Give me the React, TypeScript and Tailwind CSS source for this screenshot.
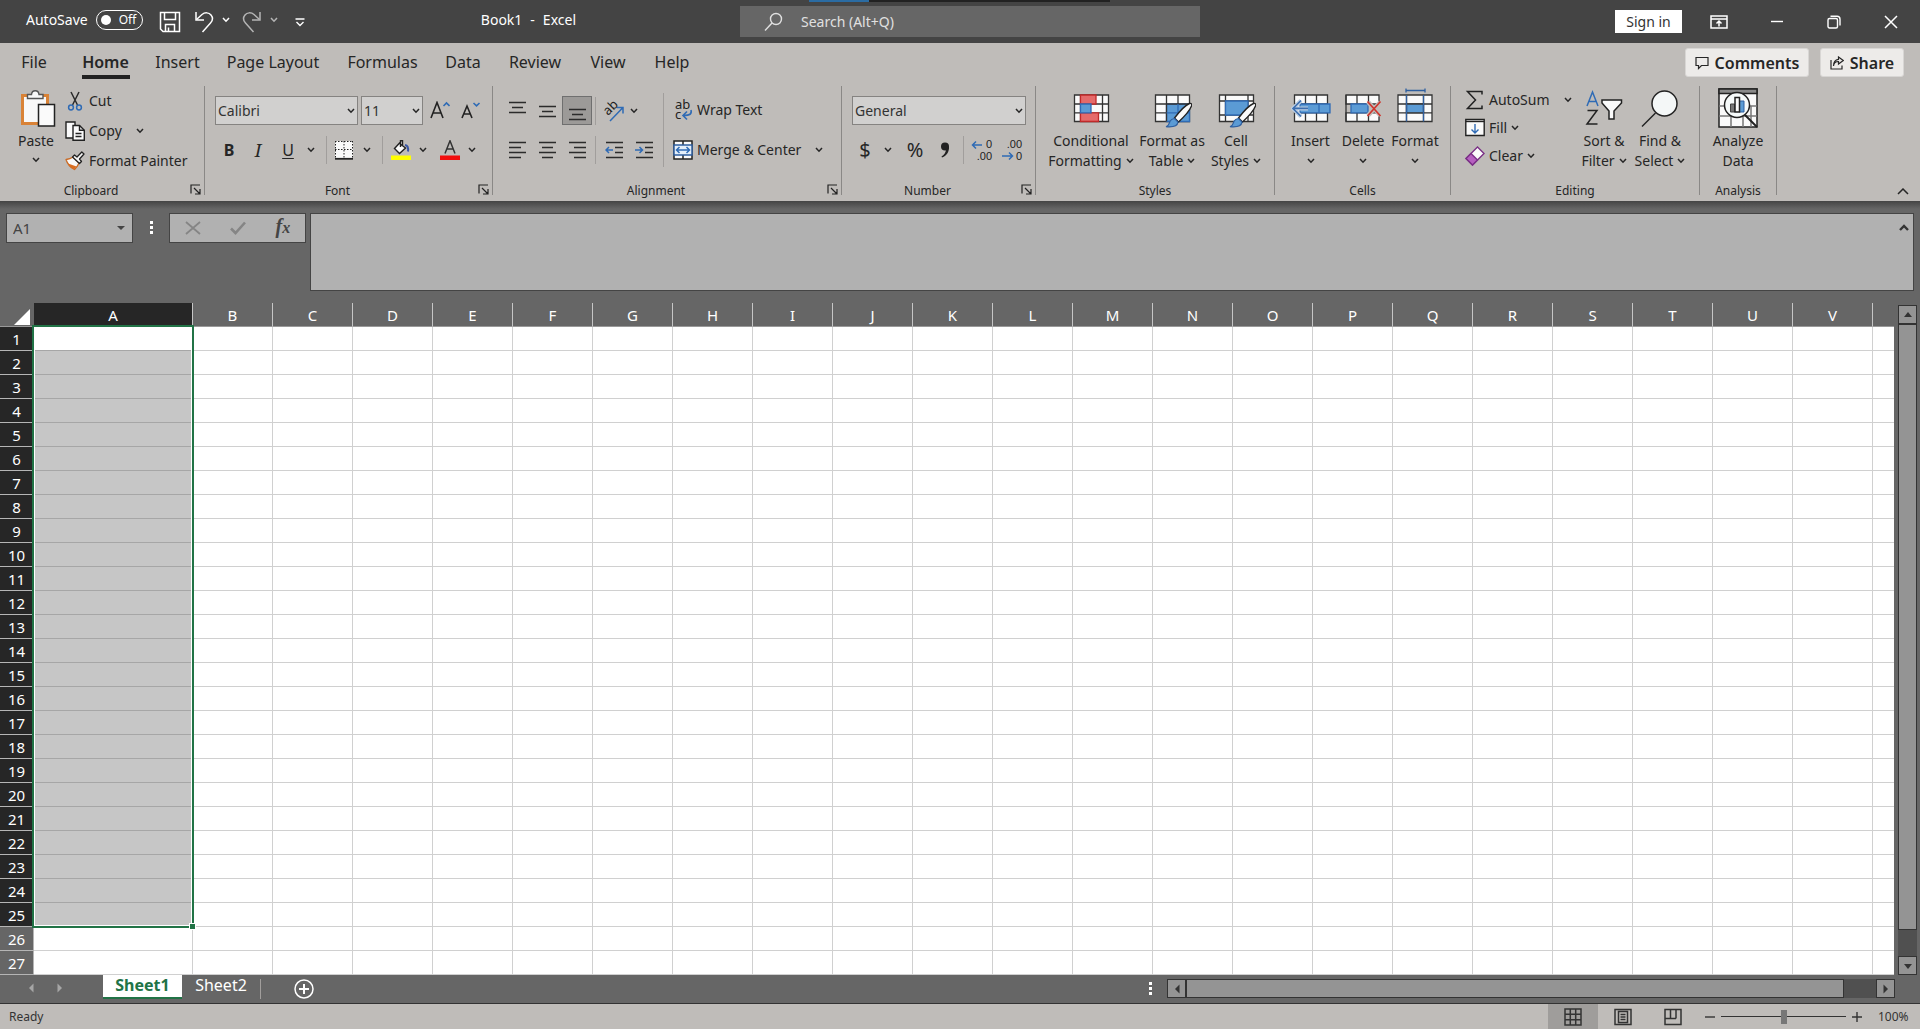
import type { ReactNode } from 'react';
import { clsx } from 'clsx';

const TABS = [
  { label: 'File', width: 'w-[68px]' },
  { label: 'Home', width: 'w-[75px]' },
  { label: 'Insert', width: 'w-[69px]' },
  { label: 'Page Layout', width: 'w-[122px]' },
  { label: 'Formulas', width: 'w-[97px]' },
  { label: 'Data', width: 'w-[64px]' },
  { label: 'Review', width: 'w-[80px]' },
  { label: 'View', width: 'w-[66px]' },
  { label: 'Help', width: 'w-[62px]' },
];

const COLUMNS = 'ABCDEFGHIJKLMNOPQRSTUV'.split('');
const ROWS = Array.from({ length: 27 }, (_, index) => index + 1);
const SELECTED_ROWS = 25;

function Chevron({ className }: { className?: string }) {
  return (
    <svg viewBox="0 0 8 6" className={clsx('h-[6px] w-2 shrink-0', className)} fill="none" stroke="currentColor" strokeWidth="1.5">
      <path d="M1 1l3 3.2L7 1" />
    </svg>
  );
}

function Divider({ className }: { className?: string }) {
  return <span className={clsx('w-px shrink-0 bg-[#a19e9c]', className)} />;
}

/* ---------- title bar icons ---------- */

function SaveIcon() {
  return (
    <svg viewBox="0 0 22 22" className="h-[22px] w-[22px]" fill="none" stroke="currentColor" strokeWidth="1.5">
      <path d="M1.5 1.5h19v19H4l-2.5-2.5z" />
      <path d="M5.5 1.5v7h11v-7M6.5 20.5v-7h9v7M9.5 20v-3.5" />
    </svg>
  );
}

function UndoIcon({ flip }: { flip?: boolean }) {
  return (
    <svg viewBox="0 0 20 22" className={clsx('h-[22px] w-5', flip && '-scale-x-100')} fill="none" stroke="currentColor" strokeWidth="1.5">
      <path d="M2 1v8h8" />
      <path d="M2.5 8.500L8 3.500c3-2.500 7-2 9 .5s1.800 5.500-.5 8L8.500 21" />
    </svg>
  );
}

function CustomizeIcon() {
  return (
    <svg viewBox="0 0 10 9" className="h-[9px] w-[10px]" fill="none" stroke="currentColor" strokeWidth="1.4">
      <path d="M.5 1h9M1.5 4L5 7.500 8.500 4" />
    </svg>
  );
}

function SearchIcon() {
  return (
    <svg viewBox="0 0 20 20" className="h-5 w-5" fill="none" stroke="currentColor" strokeWidth="1.4">
      <circle cx="12" cy="7" r="5.5" />
      <path d="M8 11L1 18.500" />
    </svg>
  );
}

function RibbonDisplayIcon() {
  return (
    <svg viewBox="0 0 18 14" className="h-[14px] w-[18px]" fill="none" stroke="currentColor" strokeWidth="1.5">
      <path d="M1 1h16v12H1zM1 4h16M9 11.500V6M6.500 8.500L9 6l2.500 2.500" />
    </svg>
  );
}

function MinimizeIcon() {
  return (
    <svg viewBox="0 0 14 14" className="h-[14px] w-[14px]" stroke="currentColor" strokeWidth="1.4">
      <path d="M1 6.500h12" />
    </svg>
  );
}

function RestoreIcon() {
  return (
    <svg viewBox="0 0 14 14" className="h-[14px] w-[14px]" fill="none" stroke="currentColor" strokeWidth="1.4">
      <rect x="1" y="3.500" width="9.5" height="9.5" rx="1.5" />
      <path d="M3.500 1.200h6.500a3 3 0 0 1 3 3v6.300" />
    </svg>
  );
}

function CloseIcon() {
  return (
    <svg viewBox="0 0 14 14" className="h-[14px] w-[14px]" stroke="currentColor" strokeWidth="1.5">
      <path d="M1 1l12 12M13 1L1 13" />
    </svg>
  );
}

/* ---------- ribbon icons ---------- */

function PasteIcon() {
  return (
    <svg viewBox="0 0 36 40" className="h-10 w-9">
      <path d="M2.500 7.500h25v28h-25z" fill="#f8f8f8" stroke="#d98236" strokeWidth="3" />
      <path d="M7.500 10.500v-4h4c.5-5 7-5 7.500 0h4v4z" fill="#f8f8f8" stroke="#555" strokeWidth="1.4" />
      <path d="M18.500 16.500h16v21.500h-16z" fill="#fafafa" stroke="#222" strokeWidth="1.5" />
    </svg>
  );
}

function CutIcon() {
  return (
    <svg viewBox="0 0 20 20" className="h-5 w-5" fill="none">
      <path d="M6 1l6.500 13M14 1L7.500 14" stroke="#2b2b2b" strokeWidth="1.5" />
      <circle cx="6" cy="16.500" r="2.4" stroke="#2f6bb5" strokeWidth="1.5" />
      <circle cx="14" cy="16.500" r="2.4" stroke="#2f6bb5" strokeWidth="1.5" />
    </svg>
  );
}

function CopyIcon() {
  return (
    <svg viewBox="0 0 20 20" className="h-5 w-5" fill="#fafafa" stroke="#222" strokeWidth="1.4">
      <path d="M8 17H1V1h9v4" />
      <path d="M8 4.500h6.500l4.800 4.800v10H8z" />
      <path d="M14.500 4.500v4.800h4.800M10.500 12.500h6M10.500 15.500h6" fill="none" />
    </svg>
  );
}

function PainterIcon() {
  return (
    <svg viewBox="0 0 20 20" className="h-5 w-5" strokeWidth="1.3" strokeLinejoin="round">
      <path d="M1 8.500c3-.3 5-1 7-2.500l6 6c-1 2.500-2.500 4.500-4.500 6.500C5 16.500 2.500 13 1 8.500z" fill="#f8f8f8" stroke="#c96a24" />
      <path d="M3 12.500l8.500 3-2.500 3c-3-1.500-4.700-3.500-6-6z" fill="#d96d20" />
      <path d="M7.500 6l2-2 2.500 2 4.800-5 2.200 2-4.500 5 2 2.500-2 2z" fill="#f8f8f8" stroke="#222" />
    </svg>
  );
}

function LauncherIcon() {
  return (
    <svg viewBox="0 0 11 11" className="h-[11px] w-[11px]" fill="none" stroke="#222" strokeWidth="1.2">
      <path d="M1 9.500V1h9M4 4l5.500 5.500M10 5v5H5" />
    </svg>
  );
}

function FontSizeIcon({ shrink }: { shrink?: boolean }) {
  return (
    <svg viewBox="0 0 20 20" className="h-5 w-5" fill="none" strokeWidth="1.6">
      <path d={shrink ? 'M1 17L6 5l5 12M2.800 13h6.400' : 'M1 17L7 1.500 13 17M3.200 12h7.600'} stroke="#222" />
      <path d={shrink ? 'M12.500 2l3 2.800L18.500 2' : 'M13.500 5l3-3 3 3'} stroke="#2f6bb5" />
    </svg>
  );
}

function BordersIcon() {
  return (
    <svg viewBox="0 0 20 20" className="h-5 w-5" fill="none" stroke="#222">
      <path d="M1 1h18v17H1z" fill="#fafafa" stroke="none" />
      <path d="M1 1.500h18M1.500 1v17M18.500 1v17M10 1v17M1 9.500h18" strokeDasharray="1.5 1.5" />
      <path d="M1 18.800h18" strokeWidth="1.8" />
    </svg>
  );
}

function FillColorIcon() {
  return (
    <svg viewBox="0 0 20 20" className="h-5 w-5" fill="none">
      <path d="M8 3l6.500 5-6 5.500L3.500 8.500 9.500 2M9.500 7V.8h2V5" fill="#fafafa" stroke="#222" strokeWidth="1.4" />
      <path d="M14 5c3 .5 3.500 3 3 6.500" stroke="#3a57a5" strokeWidth="2" />
      <path d="M0 15.500h20v4.500H0z" fill="#ff0" />
    </svg>
  );
}

function FontColorIcon() {
  return (
    <svg viewBox="0 0 20 20" className="h-5 w-5" fill="none">
      <path d="M5 13.500L10 .8l5 12.700M6.800 9h6.400" stroke="#333" strokeWidth="1.5" />
      <path d="M0 15.500h20v4.500H0z" fill="#f20d0d" />
    </svg>
  );
}

const LINES = {
  top: 'M1 1.500h17M4 6.500h11M1 11.500h17',
  middle: 'M1 5.500h17M4 10.500h11M1 15.500h17',
  bottom: 'M1 8.500h17M4 13.500h11M1 18.500h17',
  left: 'M1 2.500h17M1 7.500h12M1 12.500h17M1 17.500h12',
  center: 'M1 2.500h17M4 7.500h11M1 12.500h17M4 17.500h11',
  right: 'M1 2.500h17M6 7.500h12M1 12.500h17M6 17.500h12',
};

function LinesIcon({ kind }: { kind: keyof typeof LINES }) {
  return (
    <svg viewBox="0 0 19 20" className="h-5 w-[19px]" fill="none" stroke="#2b2b2b" strokeWidth="1.5">
      <path d={LINES[kind]} />
    </svg>
  );
}

function IndentIcon({ increase }: { increase?: boolean }) {
  return (
    <svg viewBox="0 0 19 20" className="h-5 w-[19px]" fill="none" strokeWidth="1.5">
      <path d="M1 2.500h17M10 7.500h8M10 12.500h8M1 17.500h17" stroke="#2b2b2b" />
      <path d={increase ? 'M0 10h7.500M4.500 7l3 3-3 3' : 'M8 10H.8M4 7l-3 3 3 3'} stroke="#2f6bb5" />
    </svg>
  );
}

function OrientationIcon() {
  return (
    <svg viewBox="0 0 22 22" className="h-[22px] w-[22px] overflow-visible">
      <text fontSize="13" fill="#222" transform="translate(6 16) rotate(-45)">ab</text>
      <path d="M8 21L20.500 8M15 7.500h6v6" fill="none" stroke="#2f6bb5" strokeWidth="1.5" />
    </svg>
  );
}

function WrapIcon() {
  return (
    <svg viewBox="0 0 20 22" className="h-[22px] w-5 overflow-visible">
      <text x="2" y="10" fontSize="13" fill="#222">ab</text>
      <text x="2" y="20" fontSize="13" fill="#222">c</text>
      <path d="M18 11c1 4-1 5.500-7.500 5.500M14 12.500l-4 4 4 4" fill="none" stroke="#2f6bb5" strokeWidth="1.6" />
    </svg>
  );
}

function MergeIcon() {
  return (
    <svg viewBox="0 0 20 20" className="h-5 w-5" fill="none" stroke="#222" strokeWidth="1.5">
      <path d="M1 1h18v18H1z" fill="#fafafa" />
      <path d="M10 1v4M10 15v4" />
      <path d="M1 5h18v10H1z" fill="#e4effa" stroke="#2f5f9f" />
      <path d="M3.500 10h13M6.500 7l-3 3 3 3M13.500 7l3 3-3 3" stroke="#2f6bb5" />
    </svg>
  );
}

function DecimalIcon({ decrease }: { decrease?: boolean }) {
  return (
    <svg viewBox="0 0 22 22" className="h-[22px] w-[22px] overflow-visible">
      <g fontSize="11" fill="#222" textAnchor="end" className="font-['Liberation_Sans',sans-serif]">
        <text x="21" y="9">{decrease ? '.00' : '0'}</text>
        <text x="21" y="21">{decrease ? '0' : '.00'}</text>
      </g>
      <path
        d={decrease ? 'M1 17h10M8 13.500l3.500 3.500L8 20.500' : 'M11 6H1.500M5 2.500L1.500 6 5 9.500'}
        fill="none"
        stroke="#2f6bb5"
        strokeWidth="1.5"
      />
    </svg>
  );
}

function ConditionalIcon() {
  return (
    <svg viewBox="-1 0 40 40" className="h-10 w-10" stroke="#333" strokeWidth="1.3">
      <path d="M2.500 7h34v26.500h-34z" fill="#fafafa" />
      <path d="M8.500 7v26.500M30.500 7v26.500M2.500 16h34M2.500 24.800h34" fill="none" />
      <path d="M8.500 7h15.500v9H8.500zM8.500 24.800h18v8.700h-18z" fill="#e56a6a" stroke="#c02a2a" />
      <path d="M8.500 16h10.500v8.800H8.500z" fill="#5b9bd5" stroke="#2f6bb5" />
    </svg>
  );
}

function Brush() {
  return (
    <>
      <path d="M36.500 15.500c2-.5 2.500.5 2 2.500-2 5-7.500 11-13 16l-4-4c5-6.500 10-12.500 15-14.500z" fill="#fafafa" stroke="#222" strokeWidth="1.4" />
      <path d="M21.500 30.500l3.500 3.700c-.5 3.300-4 5.300-12 4.500 3.300-1 3-3.500 4-5.500 1-1.800 2.700-2.500 4.500-2.700z" fill="#5b9bd5" stroke="#2f5f9f" strokeWidth="1.2" />
    </>
  );
}

function FormatTableIcon() {
  return (
    <svg viewBox="-1 0 40 40" className="h-10 w-10" stroke="#333" strokeWidth="1.3">
      <path d="M2.500 7h34v26.500h-34z" fill="#fafafa" />
      <path d="M13.500 16h23v17.500h-23z" fill="#5b9bd5" stroke="#2f6bb5" />
      <path d="M13.500 7v26.500M25 7v9M2.500 16h34M2.500 24.800h11" fill="none" />
      <path d="M25 16v17.500M13.500 24.800h23" stroke="#2f6bb5" />
      <Brush />
    </svg>
  );
}

function CellStylesIcon() {
  return (
    <svg viewBox="-1 0 40 40" className="h-10 w-10" stroke="#333" strokeWidth="1.3">
      <path d="M2.500 7h34v26.500h-34z" fill="#fafafa" />
      <path d="M8.500 7v26.500M31 7v26.500M2.500 13h34M2.500 27h34" fill="none" />
      <path d="M8.500 13H31v14H8.500z" fill="#5b9bd5" stroke="#2f6bb5" />
      <Brush />
    </svg>
  );
}

function InsertCellsIcon() {
  return (
    <svg viewBox="0 0 40 40" className="h-10 w-10" stroke="#333" strokeWidth="1.3">
      <path d="M3.500 7h33v26.500h-33z" fill="#fafafa" />
      <path d="M14.500 7v26.500M25.500 7v26.500M3.500 16h33M3.500 24.800h33" fill="none" />
      <path d="M9 16h30v8.800H9z" fill="#5b9bd5" stroke="#2f6bb5" />
      <path d="M28 16v8.800" stroke="#2f6bb5" />
      <path d="M17 20.400H2.500M10 12.500l-8 8 8 8" fill="none" stroke="#bfd0e2" strokeWidth="4" />
      <path d="M17 20.400H2.500M10 12.500l-8 8 8 8" fill="none" stroke="#3c6eb0" strokeWidth="1.6" />
    </svg>
  );
}

function DeleteCellsIcon() {
  return (
    <svg viewBox="0 0 40 40" className="h-10 w-10" stroke="#333" strokeWidth="1.3">
      <path d="M3 7h33v9H3zM3 24.800h33v8.700H3z" fill="#fafafa" />
      <path d="M14 7v9M25.500 7v9M14 24.800v8.700M25.500 24.800v8.700M3 7v26.500" fill="none" />
      <path d="M8 16h17v8.800H8z" fill="#5b9bd5" stroke="#2f6bb5" />
      <path d="M25 14l12.500 13.500M37.500 14L25 27.500" stroke="#bfbcb9" strokeWidth="4.5" />
      <path d="M24.500 13.500l13 14.500M37.500 13.500L24.500 28" stroke="#d0342c" strokeWidth="1.7" />
    </svg>
  );
}

function FormatCellsIcon() {
  return (
    <svg viewBox="0 0 40 40" className="h-10 w-10" stroke="#333" strokeWidth="1.3">
      <path d="M3 7h34v26.500H3z" fill="#fafafa" />
      <path d="M11.500 7v26.500M28.500 7v26.500M3 16h34M3 24.800h34" fill="none" />
      <path d="M11.500 16h17v8.800h-17z" fill="#5b9bd5" />
      <path d="M11.500 7v26.500M28.500 7v26.500M11 2.500h19M11 .5v4M30 .5v4" stroke="#2f5f9f" fill="none" />
    </svg>
  );
}

function SumIcon() {
  return (
    <svg viewBox="0 0 20 20" className="h-5 w-5" fill="none" stroke="#222" strokeWidth="1.5">
      <path d="M17 4.500V1.500H2.500L10.500 10l-8 8.500H17v-3" />
    </svg>
  );
}

function FillIcon() {
  return (
    <svg viewBox="0 0 20 20" className="h-5 w-5" fill="none" stroke="#222" strokeWidth="1.4">
      <path d="M.8 1.500h18.400v16H.8z" fill="#fafafa" />
      <path d="M.8 3.500h18.400" />
      <path d="M10 6v9M6.500 11.500l3.500 3.500 3.500-3.500" stroke="#2f6bb5" />
    </svg>
  );
}

function ClearIcon() {
  return (
    <svg viewBox="0 0 20 20" className="h-5 w-5" stroke="#7a2f86" strokeWidth="1.4">
      <path d="M12.500 1l6.500 6.500L7.500 19 1 12.500z" fill="#fafafa" />
      <path d="M6 7.500l6.500 6.500L7.500 19 1 12.500z" fill="#b65fc0" />
    </svg>
  );
}

function SortIcon() {
  return (
    <svg viewBox="0 0 40 40" className="h-10 w-10" fill="none" strokeWidth="1.5">
      <path d="M3 18L8.500 4 14 18M5 13.500h7" stroke="#2f6bb5" />
      <path d="M3.500 22.500H13L3 36h10.500" stroke="#222" />
      <path d="M18 12h19.500v3l-7.500 8v8h-5v-8l-7-8z" fill="#fafafa" stroke="#222" />
    </svg>
  );
}

function FindIcon() {
  return (
    <svg viewBox="0 0 40 40" className="h-10 w-10" stroke="#222" strokeWidth="1.5">
      <circle cx="24.500" cy="15.500" r="12.5" fill="#f4f7f7" />
      <path d="M15.500 25L2 38.500" />
    </svg>
  );
}

function AnalyzeIcon() {
  return (
    <svg viewBox="0 0 40 40" className="h-10 w-10" stroke="#222" strokeWidth="1.5">
      <path d="M1 1h38v38H1z" fill="#fafafa" />
      <path d="M1 1h38v4.500H1z" fill="#8a8a8a" />
      <path d="M1 18h38M1 28h38M13 27v12M25 27v12M33 18v21" fill="none" stroke="#777" />
      <path d="M27 27l12 12" strokeWidth="2" />
      <circle cx="19" cy="17" r="12.5" fill="#f6fafa" />
      <path d="M12.500 16h4v8h-4z" fill="#777" stroke="#444" strokeWidth="1" />
      <path d="M21.500 13h4.500v11h-4.500z" fill="#5b9bd5" stroke="#2f5f9f" strokeWidth="1" />
      <path d="M17 9.500h4.500V24H17z" fill="#fafafa" />
    </svg>
  );
}

/* ---------- ribbon building blocks ---------- */

function Group({ label, width, launcher, children }: { label: string; width: string; launcher?: boolean; children: ReactNode }) {
  return (
    <section className={clsx('flex h-[109px] shrink-0 flex-col border-r border-[#8a8886]', width)}>
      <div className="flex flex-1">{children}</div>
      <footer className="flex h-3 items-center">
        <span className={clsx('flex-1 pt-1 text-center text-xs leading-3 whitespace-nowrap', launcher && 'pr-2')}>{label}</span>
        {launcher && (
          <button className="mr-[3px]" aria-label={`${label} settings`}>
            <LauncherIcon />
          </button>
        )}
      </footer>
    </section>
  );
}

function Row({ icon, label, chevron, wide }: { icon: ReactNode; label: string; chevron?: boolean; wide?: boolean }) {
  return (
    <button className="flex items-center gap-1 text-sm leading-5 whitespace-nowrap">
      {icon}
      {label}
      {chevron && <Chevron className={wide ? 'ml-[10px]' : ''} />}
    </button>
  );
}

function BigButton({ icon, lines, width, chevron }: { icon: ReactNode; lines: string[]; width: string; chevron?: boolean }) {
  return (
    <button className={clsx('flex h-[90px] shrink-0 flex-col items-center pt-[2px] text-sm leading-5 whitespace-nowrap', width)}>
      {icon}
      <span className="mt-[3px]">{lines[0]}</span>
      <span className="flex h-5 items-center gap-1">
        {lines[1]}
        {chevron && <Chevron />}
      </span>
    </button>
  );
}

function Tool({ label, width = 'w-[30px]', active, children }: { label: string; width?: string; active?: boolean; children: ReactNode }) {
  return (
    <button
      aria-label={label}
      className={clsx('flex h-[29px] shrink-0 items-center justify-center', width, active && 'border border-[#6f6f6f] bg-[#9c9a98]')}
    >
      {children}
    </button>
  );
}

function Dropdown({ label, value, width }: { label: string; value: string; width: string }) {
  return (
    <div className={clsx('relative h-[29px] shrink-0', width)}>
      <select aria-label={label} className="h-full w-full appearance-none border border-[#858381] bg-[#d1d0cf] pl-[2px] text-sm text-[#333]">
        <option>{value}</option>
      </select>
      <Chevron className="pointer-events-none absolute top-3 right-[3px]" />
    </div>
  );
}

function Toggle() {
  return (
    <label className="flex items-center gap-2 text-sm text-white">
      AutoSave
      <input type="checkbox" role="switch" className="sr-only" />
      <span className="flex h-5 w-[47px] items-center gap-2 rounded-full border border-white pl-1 text-xs">
        <span className="h-[10px] w-[10px] rounded-full bg-white" />
        Off
      </span>
    </label>
  );
}

function TitleBar() {
  return (
    <header className="relative grid h-[43px] grid-cols-[minmax(0,1fr)_460px_minmax(0,1fr)] bg-[#444] pl-5 text-white">
      <div className="absolute top-0 left-[809px] h-[2px] w-[301px] bg-[#222]">
        <div className="h-full w-[60px] bg-[#2b6ca3]" />
      </div>
      <div className="flex h-10 items-center pl-[6px]">
        <Toggle />
        <button className="mt-1 ml-4" aria-label="Save"><SaveIcon /></button>
        <button className="mt-1 ml-[13px]" aria-label="Undo"><UndoIcon /></button>
        <button className="ml-2" aria-label="Undo history"><Chevron /></button>
        <button className="mt-1 ml-3 text-[#b5b5b5]" aria-label="Redo"><UndoIcon flip /></button>
        <button className="ml-2 text-[#b5b5b5]" aria-label="Redo history"><Chevron /></button>
        <button className="mt-1 ml-[17px]" aria-label="Customize toolbar"><CustomizeIcon /></button>
        <h1 className="mr-[164px] ml-auto flex gap-2 text-sm"><span>Book1</span> <span>-</span> <span>Excel</span></h1>
      </div>
      <label className="mt-[6px] flex h-[31px] items-center gap-[17px] bg-[#666] pl-6 text-[#e0e0e0]">
        <SearchIcon />
        <input type="search" aria-label="Search" placeholder="Search (Alt+Q)" className="flex-1 bg-transparent text-sm placeholder:text-[#e0e0e0]" />
      </label>
      <div className="flex h-[43px] items-center justify-end">
        <button className="mr-2 h-[23px] w-[67px] bg-white text-sm leading-5 text-[#333]">Sign in</button>
        <button className="flex w-[58px] justify-center" aria-label="Ribbon display options"><RibbonDisplayIcon /></button>
        <button className="flex w-[58px] justify-center" aria-label="Minimize"><MinimizeIcon /></button>
        <button className="flex w-[56px] justify-center" aria-label="Restore"><RestoreIcon /></button>
        <button className="flex w-[58px] justify-center" aria-label="Close"><CloseIcon /></button>
      </div>
    </header>
  );
}

function TabBar() {
  return (
    <nav className="flex h-[43px] items-start">
      {TABS.map(({ label, width }) => (
        <button key={label} className={clsx('flex h-9 shrink-0 flex-col items-center pt-[6px] text-base leading-[26px]', width, label === 'Home' && 'font-semibold')}>
          {label}
          {label === 'Home' && <span className="h-1 w-12 bg-[#222]" />}
        </button>
      ))}
      <div className="mt-[5px] mr-4 ml-auto flex gap-[11px]">
        <button className="flex h-[29px] w-[124px] items-center justify-center gap-[6px] rounded-[3px] border border-[#d8d6d4] bg-[#edebe9] font-semibold">
          <svg viewBox="0 0 14 14" className="h-[14px] w-[14px]" fill="none" stroke="currentColor" strokeWidth="1.2">
            <path d="M1 1.500h12v8H6.500L3.500 12.500v-3H1z" />
          </svg>
          Comments
        </button>
        <button className="flex h-[29px] w-[84px] items-center justify-center gap-[6px] rounded-[3px] border border-[#d8d6d4] bg-[#edebe9] font-semibold">
          <svg viewBox="0 0 14 14" className="h-[14px] w-[14px]" fill="none" stroke="currentColor" strokeWidth="1.2">
            <path d="M1 4v9h11v-3.500M3.500 10c.3-3 2-4.500 5-4.500V8L13.300 4.500 8.500 1v2.300C5 3.800 3.500 6 3.500 10z" />
          </svg>
          Share
        </button>
      </div>
    </nav>
  );
}

function Ribbon() {
  return (
    <div className="flex h-[115px] text-[#262626]">
      <Group label="Clipboard" width="w-[205px]" launcher>
        <button className="ml-[18px] flex w-10 shrink-0 flex-col items-center pt-[2px] text-sm leading-5">
          <PasteIcon />
          <span className="mt-[3px] -ml-1">Paste</span>
          <Chevron className="mt-[6px] -ml-1" />
        </button>
        <div className="ml-[7px] flex h-[90px] flex-col justify-around">
          <Row icon={<CutIcon />} label="Cut" />
          <Row icon={<CopyIcon />} label="Copy" chevron wide />
          <Row icon={<PainterIcon />} label="Format Painter" />
        </div>
      </Group>

      <Group label="Font" width="w-[288px]" launcher>
        <div className="flex flex-col gap-[10px] pt-[10px] pl-[10px]">
          <div className="flex items-center">
            <Dropdown label="Font" value="Calibri" width="w-[143px]" />
            <Dropdown label="Font size" value="11" width="ml-[3px] w-[62px]" />
            <Tool label="Increase font size" width="ml-[2px] w-[30px]"><FontSizeIcon /></Tool>
            <Tool label="Decrease font size" width="w-[32px]"><FontSizeIcon shrink /></Tool>
          </div>
          <div className="flex items-center">
            <Tool label="Bold" width="w-[28px]"><b className="text-base">B</b></Tool>
            <Tool label="Italic"><i className="font-[Noto_Serif,Liberation_Serif,serif] text-lg">I</i></Tool>
            <Tool label="Underline"><u className="text-base underline-offset-2">U</u></Tool>
            <Tool label="Underline style" width="w-[15px]"><Chevron /></Tool>
            <Divider className="ml-2 h-7" />
            <Tool label="Borders" width="w-[34px]"><BordersIcon /></Tool>
            <Tool label="Border style" width="w-[12px]"><Chevron /></Tool>
            <Divider className="ml-[9px] h-7" />
            <Tool label="Fill color" width="w-[36px]"><FillColorIcon /></Tool>
            <Tool label="Fill colors" width="w-[8px]"><Chevron /></Tool>
            <Tool label="Font color" width="w-[34px] ml-[6px]"><FontColorIcon /></Tool>
            <Tool label="Font colors" width="w-[10px]"><Chevron /></Tool>
          </div>
        </div>
      </Group>

      <Group label="Alignment" width="w-[349px]" launcher>
        <div className="flex flex-col gap-[10px] pt-[10px] pl-[9px]">
          <div className="flex items-center">
            <Tool label="Top align"><LinesIcon kind="top" /></Tool>
            <Tool label="Middle align"><LinesIcon kind="middle" /></Tool>
            <Tool label="Bottom align" active><LinesIcon kind="bottom" /></Tool>
            <Divider className="ml-[3px] h-7" />
            <Tool label="Orientation" width="w-[34px]"><OrientationIcon /></Tool>
            <Tool label="Orientation options" width="w-[8px]"><Chevron /></Tool>
          </div>
          <div className="flex items-center">
            <Tool label="Align left"><LinesIcon kind="left" /></Tool>
            <Tool label="Center"><LinesIcon kind="center" /></Tool>
            <Tool label="Align right"><LinesIcon kind="right" /></Tool>
            <Divider className="ml-[3px] h-7" />
            <Tool label="Decrease indent" width="w-[36px]"><IndentIcon /></Tool>
            <Tool label="Increase indent" width="w-[24px]"><IndentIcon increase /></Tool>
          </div>
        </div>
        <Divider className="mt-[7px] ml-[7px] h-[74px]" />
        <div className="flex flex-col gap-[19px] pt-[13px] pl-[9px]">
          <Row icon={<WrapIcon />} label="Wrap Text" />
          <Row icon={<MergeIcon />} label="Merge &amp; Center" chevron wide />
        </div>
      </Group>

      <Group label="Number" width="w-[194px]" launcher>
        <div className="flex flex-col gap-[10px] pt-[10px] pl-[10px]">
          <Dropdown label="Number format" value="General" width="w-[174px]" />
          <div className="flex items-center">
            <Tool label="Accounting format" width="w-[26px]"><span className="text-xl">$</span></Tool>
            <Tool label="Currencies" width="w-[20px]"><Chevron /></Tool>
            <Tool label="Percent style" width="w-[34px]"><span className="text-xl">%</span></Tool>
            <Tool label="Comma style" width="w-[26px]">
              <svg viewBox="0 0 10 16" className="h-4 w-[10px]" fill="#222">
                <circle cx="5" cy="4.500" r="4" />
                <path d="M9 4.500c.3 5-2 9-7 11l-.5-1C4.500 12.500 6 10 6 7z" />
              </svg>
            </Tool>
            <Divider className="ml-[5px] h-7" />
            <Tool label="Increase decimal" width="w-[36px]"><DecimalIcon /></Tool>
            <Tool label="Decrease decimal" width="w-[24px]"><DecimalIcon decrease /></Tool>
          </div>
        </div>
      </Group>

      <Group label="Styles" width="w-[239px]">
        <BigButton icon={<ConditionalIcon />} lines={['Conditional', 'Formatting']} width="w-[110px]" chevron />
        <BigButton icon={<FormatTableIcon />} lines={['Format as', 'Table']} width="w-[52px]" chevron />
        <BigButton icon={<CellStylesIcon />} lines={['Cell', 'Styles']} width="w-[76px]" chevron />
      </Group>

      <Group label="Cells" width="w-[176px]">
        <BigButton icon={<InsertCellsIcon />} lines={['Insert']} width="w-[71px]" chevron />
        <BigButton icon={<DeleteCellsIcon />} lines={['Delete']} width="w-[34px]" chevron />
        <BigButton icon={<FormatCellsIcon />} lines={['Format']} width="w-[70px]" chevron />
      </Group>

      <Group label="Editing" width="w-[249px]">
        <div className="flex h-[84px] w-[126px] shrink-0 flex-col justify-around pl-[14px]">
          <Row icon={<SumIcon />} label="AutoSum" chevron wide />
          <Row icon={<FillIcon />} label="Fill" chevron />
          <Row icon={<ClearIcon />} label="Clear" chevron />
        </div>
        <BigButton icon={<SortIcon />} lines={['Sort &', 'Filter']} width="w-[54px]" chevron />
        <BigButton icon={<FindIcon />} lines={['Find &', 'Select']} width="w-[58px]" chevron />
      </Group>

      <Group label="Analysis" width="w-[77px]">
        <BigButton icon={<AnalyzeIcon />} lines={['Analyze', 'Data']} width="w-[76px]" />
      </Group>

      <button className="mr-[11px] mb-[6px] ml-auto self-end" aria-label="Collapse ribbon">
        <svg viewBox="0 0 12 7" className="h-[7px] w-3" fill="none" stroke="currentColor" strokeWidth="1.5">
          <path d="M1 6l5-5 5 5" />
        </svg>
      </button>
    </div>
  );
}

function Dots() {
  return (
    <span className="flex shrink-0 flex-col gap-[2px]">
      <span className="h-[3px] w-[3px] bg-white" />
      <span className="h-[3px] w-[3px] bg-white" />
      <span className="h-[3px] w-[3px] bg-white" />
    </span>
  );
}

function FormulaBar() {
  return (
    <div className="flex h-[102px] items-start bg-[linear-gradient(#444,#666_8px)] pt-3 pr-[6px] pl-[6px]">
      <div className="relative h-[30px] w-[127px] shrink-0">
        <input aria-label="Name box" defaultValue="A1" className="h-full w-full border border-[#444] bg-[#b1b1b1] pl-[6px] text-[15px] text-[#444]" />
        <svg viewBox="0 0 8 4" className="absolute top-[13px] right-2 h-1 w-2" fill="#444">
          <path d="M0 0h8L4 4z" />
        </svg>
      </div>
      <div className="mt-2 ml-[17px]"><Dots /></div>
      <div className="ml-4 flex h-[30px] w-[137px] shrink-0 items-center justify-around border border-[#444] bg-[#b1b1b1] text-[#858585]">
        <button aria-label="Cancel">
          <svg viewBox="0 0 16 14" className="h-[14px] w-4" fill="none" stroke="currentColor" strokeWidth="1.8">
            <path d="M1 1l14 12M15 1L1 13" />
          </svg>
        </button>
        <button aria-label="Enter">
          <svg viewBox="0 0 16 14" className="h-[14px] w-4" fill="none" stroke="currentColor" strokeWidth="2.6">
            <path d="M1 7.500L5.500 12 15 1.500" />
          </svg>
        </button>
        <button aria-label="Insert function" className="font-[Liberation_Serif,serif] text-xl leading-5 font-bold text-[#444] italic">
          f<span className="text-base">x</span>
        </button>
      </div>
      <div className="relative ml-1 h-[78px] flex-1">
        <textarea aria-label="Formula" className="block h-full w-full resize-none border border-[#444] bg-[#b1b1b1]" />
        <svg viewBox="0 0 10 7" className="absolute top-[11px] right-[5px] h-[7px] w-[10px]" fill="none" stroke="#333" strokeWidth="2.4">
          <path d="M1 6l4-4 4 4" />
        </svg>
      </div>
    </div>
  );
}

function Arrow({ direction, className }: { direction: 'up' | 'down' | 'left' | 'right'; className?: string }) {
  const paths = { up: 'M1 7l4-5 4 5z', down: 'M1 3l4 5 4-5z', left: 'M7.500 .5v9L3 5z', right: 'M2.500 .5v9L7 5z' };
  return (
    <svg viewBox="0 0 10 10" className={clsx('h-[10px] w-[10px]', className)} fill="currentColor">
      <path d={paths[direction]} />
    </svg>
  );
}

function ScrollButton({ direction }: { direction: 'up' | 'down' | 'left' | 'right' }) {
  return (
    <button aria-label={`Scroll ${direction}`} className="flex h-[19px] w-[19px] shrink-0 items-center justify-center border border-[#333] bg-[#949494] text-[#333]">
      <Arrow direction={direction} />
    </button>
  );
}

function Sheet() {
  return (
    <div className="flex bg-[#666]">
      <div className="relative min-w-0 flex-1 overflow-hidden">
        <table className="w-full table-fixed border-separate border-spacing-0 text-[15px] leading-[22px] text-white">
          <colgroup>
            <col className="w-[34px]" />
            <col className="w-[159px]" />
            {COLUMNS.slice(1).map((column) => (
              <col key={column} className="w-[80px]" />
            ))}
            <col />
          </colgroup>
          <thead>
            <tr className="h-6">
              <th className="border-b border-[#999] p-0">
                <svg viewBox="0 0 16 16" className="mt-1 ml-[14px] h-4 w-4" fill="#fff">
                  <path d="M16 0v16H0z" />
                </svg>
              </th>
              {COLUMNS.map((column) => (
                <th
                  key={column}
                  scope="col"
                  className={clsx('border-r border-b border-r-[#c6c6c6] border-b-[#999] p-0 font-normal', column === 'A' && 'bg-[#262626]')}
                >
                  {column}
                </th>
              ))}
              <th className="border-b border-[#999] p-0" />
            </tr>
          </thead>
          <tbody>
            {ROWS.map((row) => {
              const selected = row <= SELECTED_ROWS;
              return (
                <tr key={row} className="h-6">
                  <th
                    scope="row"
                    className={clsx('border-r border-b border-[#b5b5b5] p-0 font-normal', selected ? 'bg-[#262626]' : 'bg-[#666]')}
                  >
                    {row}
                  </th>
                  <td className={clsx('border-r border-b p-0', selected ? 'border-[#a6a6a6]' : 'border-[#d0d0d0]', selected && row > 1 ? 'bg-[#c6c6c6]' : 'bg-white')} />
                  {COLUMNS.slice(1).map((column) => (
                    <td key={column} className="border-r border-b border-[#d0d0d0] bg-white p-0" />
                  ))}
                  <td className="border-b border-[#d0d0d0] bg-white p-0" />
                </tr>
              );
            })}
          </tbody>
        </table>
        <div className="pointer-events-none absolute top-[22px] left-8 h-[603px] w-[162px] border-2 border-[#217346] inset-shadow-[0_0_0_1px_#fff]">
          <span className="absolute -right-[4px] -bottom-[4px] h-[7px] w-[7px] border border-white bg-[#217346]" />
        </div>
      </div>
      <div className="mr-[3px] ml-1 flex w-[19px] shrink-0 flex-col pt-[2px]">
        <ScrollButton direction="up" />
        <div className="flex flex-1 flex-col bg-[#505050] pb-[26px]">
          <div className="flex-1 border border-[#333] bg-[#949494]" />
        </div>
        <ScrollButton direction="down" />
      </div>
    </div>
  );
}

function SheetTabs() {
  return (
    <div className="flex h-7 items-start bg-[#666] text-white">
      <button className="mt-2 ml-[26px] text-[#a6a6a6]" aria-label="Previous sheet"><Arrow direction="left" /></button>
      <button className="mt-2 ml-[19px] text-[#a6a6a6]" aria-label="Next sheet"><Arrow direction="right" /></button>
      <button className="ml-[38px] h-6 w-[79px] border-b-2 border-[#217346] bg-white pb-[2px] text-base leading-5 font-bold text-[#217346]">Sheet1</button>
      <button className="h-6 w-[78px] pb-1 text-base leading-5">Sheet2</button>
      <Divider className="mt-1 h-5" />
      <button className="mt-1 ml-[33px]" aria-label="New sheet">
        <svg viewBox="0 0 20 20" className="h-5 w-5" fill="none" stroke="#fff" strokeWidth="1.5">
          <circle cx="10" cy="10" r="9" />
          <path d="M10 5v10M5 10h10" strokeWidth="2" />
        </svg>
      </button>
      <div className="mt-[7px] ml-auto"><Dots /></div>
      <div className="mt-1 mr-[25px] ml-[15px] flex w-[728px] shrink-0">
        <ScrollButton direction="left" />
        <div className="flex flex-1 bg-[#505050] pr-8">
          <div className="h-[19px] flex-1 border border-[#333] bg-[#949494]" />
        </div>
        <ScrollButton direction="right" />
      </div>
    </div>
  );
}

function StatusBar() {
  return (
    <footer className="flex h-[26px] items-center border-t border-[#333] bg-[#bfbcb9] text-[#333]">
      <span className="pl-[9px] text-xs">Ready</span>
      <button aria-label="Normal view" className="ml-auto flex h-full w-[50px] items-center justify-center bg-[#9f9d9b]">
        <svg viewBox="0 0 18 18" className="h-[18px] w-[18px]" fill="none" stroke="currentColor" strokeWidth="1.5">
          <path d="M1 1h16v16H1zM1 6.300h16M1 11.700h16M6.300 1v16M11.700 1v16" />
        </svg>
      </button>
      <button aria-label="Page layout view" className="flex h-full w-[50px] items-center justify-center">
        <svg viewBox="0 0 18 18" className="h-[18px] w-[18px]" fill="none" stroke="currentColor" strokeWidth="1.5">
          <path d="M1 1.500h16v15H1zM4.500 3.500h9v11h-9zM6.500 6.500h5M6.500 9h5M6.500 11.500h5" />
        </svg>
      </button>
      <button aria-label="Page break preview" className="flex h-full w-[50px] items-center justify-center">
        <svg viewBox="0 0 18 18" className="h-[18px] w-[18px]" fill="none" stroke="currentColor" strokeWidth="1.5">
          <path d="M1 1.500h16v15H1zM6.500 1.500v9M12 1.500v9M1 10.500h11" />
        </svg>
      </button>
      <button aria-label="Zoom out" className="ml-[7px] flex w-[10px]">
        <svg viewBox="0 0 10 10" className="h-[10px] w-[10px]" stroke="currentColor" strokeWidth="1.4">
          <path d="M0 5h10" />
        </svg>
      </button>
      <input
        type="range"
        aria-label="Zoom"
        defaultValue={50}
        className="mx-[6px] h-4 w-[125px] appearance-none bg-[linear-gradient(#333,#333)] bg-[length:100%_1px] bg-center bg-no-repeat [&::-webkit-slider-thumb]:h-[14px] [&::-webkit-slider-thumb]:w-[6px] [&::-webkit-slider-thumb]:appearance-none [&::-webkit-slider-thumb]:bg-[#777]"
      />
      <button aria-label="Zoom in" className="flex w-[10px]">
        <svg viewBox="0 0 10 10" className="h-[10px] w-[10px]" stroke="currentColor" strokeWidth="1.4">
          <path d="M0 5h10M5 0v10" />
        </svg>
      </button>
      <button className="w-[58px] pl-4 text-left text-xs">100%</button>
    </footer>
  );
}

export default function App() {
  return (
    <div className="flex flex-col overflow-hidden bg-[#666] font-['Noto_Sans','Open_Sans',sans-serif]">
      <TitleBar />
      <div className="bg-[#bfbcb9] text-[#262626]">
        <TabBar />
        <Ribbon />
      </div>
      <FormulaBar />
      <Sheet />
      <SheetTabs />
      <StatusBar />
    </div>
  );
}
